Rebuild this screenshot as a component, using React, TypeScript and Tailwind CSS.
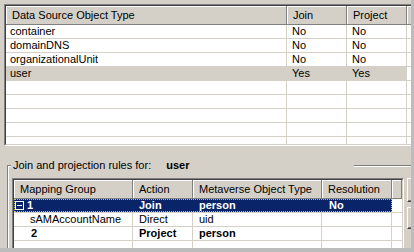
import React from "react";

interface TypeRow {
  name: string;
  join: string;
  project: string;
  selected?: boolean;
}

const typeRows: TypeRow[] = [
  { name: "container", join: "No", project: "No" },
  { name: "domainDNS", join: "No", project: "No" },
  { name: "organizationalUnit", join: "No", project: "No" },
  { name: "user", join: "Yes", project: "Yes", selected: true },
];

function HeaderCell({ children }: { children?: React.ReactNode }) {
  return (
    <div className="h-full flex items-center pl-[6px] border-r border-[#808080] shadow-[inset_1px_1px_0_#ffffff] whitespace-nowrap overflow-hidden">
      {children}
    </div>
  );
}

function MinusBox() {
  return (
    <span className="w-[9px] h-[9px] border border-white flex items-center justify-center shrink-0">
      <span className="w-[5px] h-[1px] bg-white" />
    </span>
  );
}

export default function App() {
  return (
    <div className="w-[414px] h-[252px] bg-[#d4d0c8] flex flex-col overflow-hidden font-['Liberation_Sans',Arial,sans-serif] text-[11px] text-black">
      <div className="flex-1 flex min-h-0">
        <div className="w-[411px] flex flex-col min-h-0 overflow-hidden">
          {/* Object type list */}
          <div className="mt-[4px] ml-[4px] h-[142px] border-t border-l border-b border-[#808080] border-b-white">
            <div className="h-full border-t border-l border-b border-[#404040] border-b-[#d4d0c8] bg-white overflow-hidden">
              <div className="h-[19px] grid grid-cols-[281px_60px_60px_1fr] bg-[#d4d0c8] border-b border-[#808080]">
                <HeaderCell>Data Source Object Type</HeaderCell>
                <HeaderCell>Join</HeaderCell>
                <HeaderCell>Project</HeaderCell>
                <HeaderCell />
              </div>
              {typeRows.map((r) => (
                <div key={r.name} className="h-[14px] grid grid-cols-[281px_60px_60px_1fr] border-b border-[#d4d0c8] leading-[13px]">
                  <div className={`pl-[4px] border-r border-[#d4d0c8] ${r.selected ? "bg-[#d4d0c8]" : ""}`}>{r.name}</div>
                  <div className={`pl-[5px] border-r border-[#d4d0c8] ${r.selected ? "bg-[#d4d0c8]" : ""}`}>{r.join}</div>
                  <div className={`pl-[5px] border-r border-[#d4d0c8] ${r.selected ? "bg-[#d4d0c8]" : ""}`}>{r.project}</div>
                  <div />
                </div>
              ))}
              {[0, 1, 2, 3, 4].map((i) => (
                <div key={i} className="h-[14px] grid grid-cols-[281px_60px_60px_1fr] border-b border-[#d4d0c8]">
                  <div className="border-r border-[#d4d0c8]" />
                  <div className="border-r border-[#d4d0c8]" />
                  <div className="border-r border-[#d4d0c8]" />
                  <div />
                </div>
              ))}
            </div>
          </div>

          {/* Rules group box */}
          <div className="relative mt-[19px] ml-[7px] flex-1 min-h-0 border-t border-l border-[#808080]">
            <div className="absolute left-[3px] top-[-8px] w-[343px] h-[14px] bg-[#d4d0c8] flex items-center pl-[2px] whitespace-nowrap">
              <span>Join and projection rules for:</span>
              <span className="ml-[15px] font-bold">user</span>
            </div>
            <div className="h-full border-t border-l border-white pl-[3px] pt-[11px] flex gap-[3px] overflow-hidden">
              {/* Mapping list */}
              <div className="w-[392px] shrink-0 h-full border-t border-l border-r border-[#808080] border-r-white">
                <div className="h-full border-t border-l border-r border-[#404040] border-r-[#d4d0c8] bg-white overflow-hidden">
                  <div className="h-[19px] grid grid-cols-[119px_60px_129px_70px_1fr] bg-[#d4d0c8] border-b border-[#808080]">
                    <HeaderCell>Mapping Group</HeaderCell>
                    <HeaderCell>Action</HeaderCell>
                    <HeaderCell>Metaverse Object Type</HeaderCell>
                    <HeaderCell>Resolution</HeaderCell>
                    <HeaderCell />
                  </div>
                  <div className="h-[14px] grid grid-cols-[378px_1fr] border-b border-[#d4d0c8]">
                    <div className="bg-[#0a246a] text-white font-bold outline outline-1 outline-dotted outline-[#c8c060] -outline-offset-1 grid grid-cols-[119px_60px_129px_70px] leading-[13px]">
                      <div className="flex items-center gap-[3px] pl-[1px]">
                        <MinusBox />
                        <span>1</span>
                      </div>
                      <div className="pl-[6px]">Join</div>
                      <div className="pl-[6px]">person</div>
                      <div className="pl-[7px]">No</div>
                    </div>
                    <div />
                  </div>
                  <div className="h-[14px] grid grid-cols-[119px_60px_129px_70px_1fr] border-b border-[#d4d0c8] leading-[13px]">
                    <div className="pl-[16px] border-r border-[#d4d0c8]">sAMAccountName</div>
                    <div className="pl-[6px] border-r border-[#d4d0c8]">Direct</div>
                    <div className="pl-[6px] border-r border-[#d4d0c8]">uid</div>
                    <div className="border-r border-[#d4d0c8]" />
                    <div />
                  </div>
                  <div className="h-[14px] grid grid-cols-[119px_60px_129px_70px_1fr] border-b border-[#d4d0c8] leading-[13px] font-bold">
                    <div className="pl-[17px] border-r border-[#d4d0c8]">2</div>
                    <div className="pl-[6px] border-r border-[#d4d0c8]">Project</div>
                    <div className="pl-[6px] border-r border-[#d4d0c8]">person</div>
                    <div className="border-r border-[#d4d0c8]" />
                    <div />
                  </div>
                  <div className="h-[14px] grid grid-cols-[119px_60px_129px_70px_1fr]">
                    <div className="border-r border-[#d4d0c8]" />
                    <div className="border-r border-[#d4d0c8]" />
                    <div className="border-r border-[#d4d0c8]" />
                    <div className="border-r border-[#d4d0c8]" />
                    <div />
                  </div>
                </div>
              </div>
              {/* Buttons, cut off at the right edge */}
              <div className="flex flex-col gap-[5px] shrink-0">
                <div className="w-[20px] h-[24px] border-t border-l border-b border-white border-b-[#404040] shadow-[inset_0_-1px_0_#808080]" />
                <div className="w-[20px] h-[22px] border-t border-l border-b border-white border-b-[#404040] shadow-[inset_0_-1px_0_#808080]" />
              </div>
            </div>
          </div>
        </div>
        <div className="w-[3px] bg-[#bcbcbc]" />
      </div>
      <div className="h-[4px] bg-[#bcbcbc]" />
    </div>
  );
}
